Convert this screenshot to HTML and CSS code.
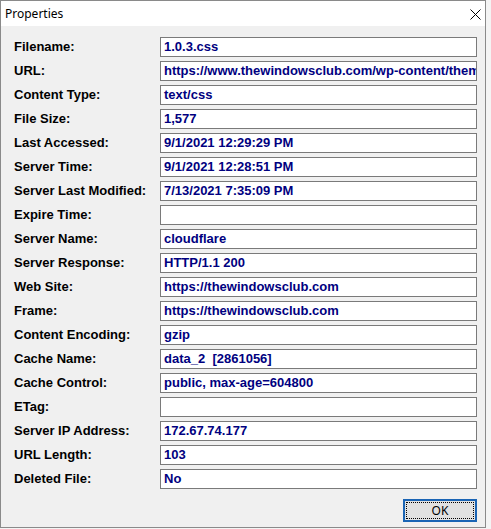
FILE: index.html
```html
<!DOCTYPE html>
<html>
<head>
<meta charset="utf-8">
<title>Properties</title>
<link rel="stylesheet" href="styles.css">
</head>
<body>
<div class="window">
  <div class="titlebar">
    <span class="title">Properties</span>
    <svg class="close" width="11" height="11" viewBox="0 0 11 11"><path d="M0.5 0.5 L10.5 10.5 M10.5 0.5 L0.5 10.5" stroke="#000" stroke-width="1" fill="none"/></svg>
  </div>
  <div class="body">
    <div class="grid">
      <div class="label">Filename:</div><div class="field">1.0.3.css</div>
      <div class="label">URL:</div><div class="field">https://www.thewindowsclub.com/wp-content/themes/genesis/lib/css/1.0.3.css</div>
      <div class="label">Content Type:</div><div class="field">text/css</div>
      <div class="label">File Size:</div><div class="field">1,577</div>
      <div class="label">Last Accessed:</div><div class="field">9/1/2021 12:29:29 PM</div>
      <div class="label">Server Time:</div><div class="field">9/1/2021 12:28:51 PM</div>
      <div class="label">Server Last Modified:</div><div class="field">7/13/2021 7:35:09 PM</div>
      <div class="label">Expire Time:</div><div class="field"></div>
      <div class="label">Server Name:</div><div class="field">cloudflare</div>
      <div class="label">Server Response:</div><div class="field">HTTP/1.1 200</div>
      <div class="label">Web Site:</div><div class="field">https://thewindowsclub.com</div>
      <div class="label">Frame:</div><div class="field">https://thewindowsclub.com</div>
      <div class="label">Content Encoding:</div><div class="field">gzip</div>
      <div class="label">Cache Name:</div><div class="field">data_2&nbsp; [2861056]</div>
      <div class="label">Cache Control:</div><div class="field">public, max-age=604800</div>
      <div class="label">ETag:</div><div class="field"></div>
      <div class="label">Server IP Address:</div><div class="field">172.67.74.177</div>
      <div class="label">URL Length:</div><div class="field">103</div>
      <div class="label">Deleted File:</div><div class="field">No</div>
    </div>
    <div class="actions">
      <button class="btn">OK</button>
    </div>
  </div>
</div>
</body>
</html>
```
FILE: styles.css
```css
html, body {
  margin: 0;
  padding: 0;
}
body {
  background: #f4f4f4;
  width: 491px;
  height: 529px;
  overflow: hidden;
}
.window {
  box-sizing: border-box;
  width: 486px;
  height: 528px;
  border: 1px solid #8a8a8a;
  background: #f0f0f0;
  display: flex;
  flex-direction: column;
}
.titlebar {
  height: 25px;
  background: #ffffff;
  display: flex;
  align-items: center;
  justify-content: space-between;
  padding-left: 4px;
  padding-right: 4px;
}
.title {
  font-family: "Noto Sans", "Open Sans", sans-serif;
  font-size: 12px;
  color: #000;
  margin-top: -1px;
}
.close {
  display: block;
  margin-top: 1px;
}
.body {
  padding: 11px 8px 0 12px;
}
.grid {
  display: grid;
  grid-template-columns: 147px 317px;
  grid-auto-rows: 20px;
  row-gap: 4px;
  font-family: "Liberation Sans", Arial, sans-serif;
  font-weight: bold;
  font-size: 13px;
}
.label {
  line-height: 20px;
  color: #000;
  white-space: nowrap;
  padding-left: 1px;
}
.field {
  box-sizing: border-box;
  height: 20px;
  border: 1px solid #7a7a7a;
  background: #fff;
  color: #000080;
  line-height: 18px;
  padding: 0 2px 0 3px;
  white-space: nowrap;
  overflow: hidden;
}
.actions {
  display: flex;
  justify-content: flex-end;
  margin-top: 10px;
}
.btn {
  box-sizing: border-box;
  width: 74px;
  height: 23px;
  border: 2px solid #1a64b4;
  background: #e1e1e1;
  font-family: "Noto Sans", "Open Sans", sans-serif;
  font-size: 12px;
  color: #000;
  padding: 0;
  margin: 0;
  outline: 1px dotted #000;
  outline-offset: -4px;
}
```
